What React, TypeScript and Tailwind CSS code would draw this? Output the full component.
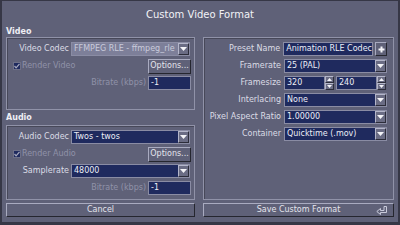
import React from "react"

const DownArrow = () => (
  <svg width="7" height="6" viewBox="0 0 7 6">
    <path d="M0 1h7L3.5 5z" fill="#f4f4f8" />
  </svg>
)

const DropButton = () => (
  <div className="w-[11px] h-full flex items-center justify-center bg-[#6a6c84] border border-t-[#b4b6ca] border-l-[#b4b6ca] border-r-[#2c2d3a] border-b-[#2c2d3a]">
    <DownArrow />
  </div>
)

const Select = ({ value, disabled, className }: { value: string; disabled?: boolean; className?: string }) => (
  <div
    className={
      "h-[14px] flex border border-[#8a8ca4] " +
      (disabled ? "bg-[#7d7f99] text-[#c9cbdb] " : "bg-[#1f2a5e] text-[#eceef6] ") +
      (className ?? "")
    }
  >
    <div className="flex-1 overflow-hidden whitespace-nowrap pl-[2px] leading-[12px]">{value}</div>
    <DropButton />
  </div>
)

const TextField = ({ value, className }: { value: string; className?: string }) => (
  <div className={"h-[14px] bg-[#1f2a5e] border border-[#8a8ca4] text-[#eceef6] pl-[2px] leading-[12px] overflow-hidden whitespace-nowrap " + (className ?? "")}>
    {value}
  </div>
)

const Spinner = () => (
  <div className="w-[9px] h-[14px] flex flex-col">
    <div className="flex-1 flex items-center justify-center bg-[#6a6c84] border border-t-[#b4b6ca] border-l-[#b4b6ca] border-r-[#2c2d3a] border-b-[#2c2d3a]">
      <svg width="5" height="3" viewBox="0 0 5 3"><path d="M0 3h5L2.5 0z" fill="#f4f4f8" /></svg>
    </div>
    <div className="flex-1 flex items-center justify-center bg-[#6a6c84] border border-t-[#b4b6ca] border-l-[#b4b6ca] border-r-[#2c2d3a] border-b-[#2c2d3a]">
      <svg width="5" height="3" viewBox="0 0 5 3"><path d="M0 0h5L2.5 3z" fill="#f4f4f8" /></svg>
    </div>
  </div>
)

const RaisedButton = ({ children, className }: { children: React.ReactNode; className?: string }) => (
  <div
    className={
      "flex items-center justify-center bg-[#5f6178] border border-t-[#a9abc0] border-l-[#a9abc0] border-r-[#25262f] border-b-[#25262f] text-[#e4e4ec] " +
      (className ?? "")
    }
  >
    {children}
  </div>
)

const CheckBox = () => (
  <div className="w-[8px] h-[8px] bg-[#1f2a5e] border border-[#6e7088] flex items-center justify-center">
    <svg width="6" height="6" viewBox="0 0 6 6">
      <path d="M0.5 3l1.6 1.8L5.5 0.8" stroke="#a9abbf" strokeWidth="1.2" fill="none" />
    </svg>
  </div>
)

const LeftRow = ({ label, children }: { label: string; children: React.ReactNode }) => (
  <div className="flex items-center h-[14px]">
    <div className="w-[64px] text-right text-[#dcdce6] pr-[2px] whitespace-nowrap">{label}</div>
    <div className="flex-1">{children}</div>
  </div>
)

const RightRow = ({ label, children }: { label: string; children: React.ReactNode }) => (
  <div className="flex items-center h-[14px]">
    <div className="w-[80px] text-right text-[#dcdce6] pr-[3px] whitespace-nowrap">{label}</div>
    <div className="flex-1">{children}</div>
  </div>
)

const RenderRow = ({ label }: { label: string }) => (
  <div className="flex items-center h-[14px] justify-between">
    <div className="flex items-center gap-[1px] pl-[6px]">
      <CheckBox />
      <span className="text-[#9092a8]">{label}</span>
    </div>
    <RaisedButton className="w-[43px] h-[15px] mr-[-1px]">Options...</RaisedButton>
  </div>
)

const BitrateRow = () => (
  <div className="flex items-center h-[14px] justify-end gap-[2px]">
    <span className="text-[#9092a8]">Bitrate (kbps)</span>
    <TextField value="-1" className="w-[43px] mr-[-1px] text-[#c5c7d8]" />
  </div>
)

const App = () => {
  return (
    <div className="w-[400px] h-[225px] bg-[#5f6178] border-l-2 border-t border-r-2 border-b-[3px] border-[#363746] flex flex-col font-['DejaVu_Sans',sans-serif] text-[8px] leading-none">
      <div className="h-[26px] flex items-center justify-center text-[10px] text-[#f2f2f6] pt-[1px]">Custom Video Format</div>
      <div className="flex pl-[4px] gap-[8px]">
        <div className="w-[189px] flex flex-col">
          <div className="h-[10px] flex items-center font-bold text-[#eeeef4]">Video</div>
          <div className="h-[73px] border border-[#9092a8] shadow-[inset_1px_1px_0_#474859] flex flex-col gap-[3px] pt-[4px] pr-[4px]">
            <LeftRow label="Video Codec">
              <Select value="FFMPEG RLE - ffmpeg_rle" disabled />
            </LeftRow>
            <RenderRow label="Render Video" />
            <BitrateRow />
          </div>
          <div className="h-[15px] flex items-center font-bold text-[#eeeef4] pt-[1px]">Audio</div>
          <div className="h-[75px] border border-[#9092a8] shadow-[inset_1px_1px_0_#474859] flex flex-col gap-[3px] pt-[4px] pr-[4px]">
            <LeftRow label="Audio Codec">
              <Select value="Twos - twos" />
            </LeftRow>
            <RenderRow label="Render Audio" />
            <LeftRow label="Samplerate">
              <Select value="48000" />
            </LeftRow>
            <BitrateRow />
          </div>
        </div>
        <div className="w-[191px] flex flex-col">
          <div className="h-[10px]" />
          <div className="h-[163px] border border-[#9092a8] shadow-[inset_1px_1px_0_#474859] flex flex-col gap-[3px] pt-[4px] pr-[6px]">
            <RightRow label="Preset Name">
              <div className="flex gap-[2px]">
                <TextField value="Animation RLE Codec" className="flex-1" />
                <RaisedButton className="w-[12px] h-[14px]">
                  <svg width="7" height="7" viewBox="0 0 7 7">
                    <path d="M2.5 0.5h2v2h2v2h-2v2h-2v-2h-2v-2h2z" fill="#f4f4f8" />
                  </svg>
                </RaisedButton>
              </div>
            </RightRow>
            <RightRow label="Framerate">
              <Select value="25 (PAL)" />
            </RightRow>
            <RightRow label="Framesize">
              <div className="flex">
                <TextField value="320" className="w-[41px]" />
                <Spinner />
                <div className="w-[2px]" />
                <TextField value="240" className="w-[41px]" />
                <Spinner />
              </div>
            </RightRow>
            <RightRow label="Interlacing">
              <Select value="None" />
            </RightRow>
            <RightRow label="Pixel Aspect Ratio">
              <Select value="1.00000" />
            </RightRow>
            <RightRow label="Container">
              <Select value="Quicktime (.mov)" />
            </RightRow>
          </div>
        </div>
      </div>
      <div className="flex pl-[4px] gap-[8px] mt-[3px]">
        <RaisedButton className="w-[189px] h-[14px]">Cancel</RaisedButton>
        <RaisedButton className="w-[191px] h-[14px] relative">
          Save Custom Format
          <svg className="absolute right-[6px] top-[2px]" width="11" height="9" viewBox="0 0 11 9">
            <path d="M8 0.5h2.5v6H4.5v2L0.8 5.5 4.5 2.5v2H8z" stroke="#c9cbdb" strokeWidth="1" fill="none" />
          </svg>
        </RaisedButton>
      </div>
    </div>
  )
}

export default App
